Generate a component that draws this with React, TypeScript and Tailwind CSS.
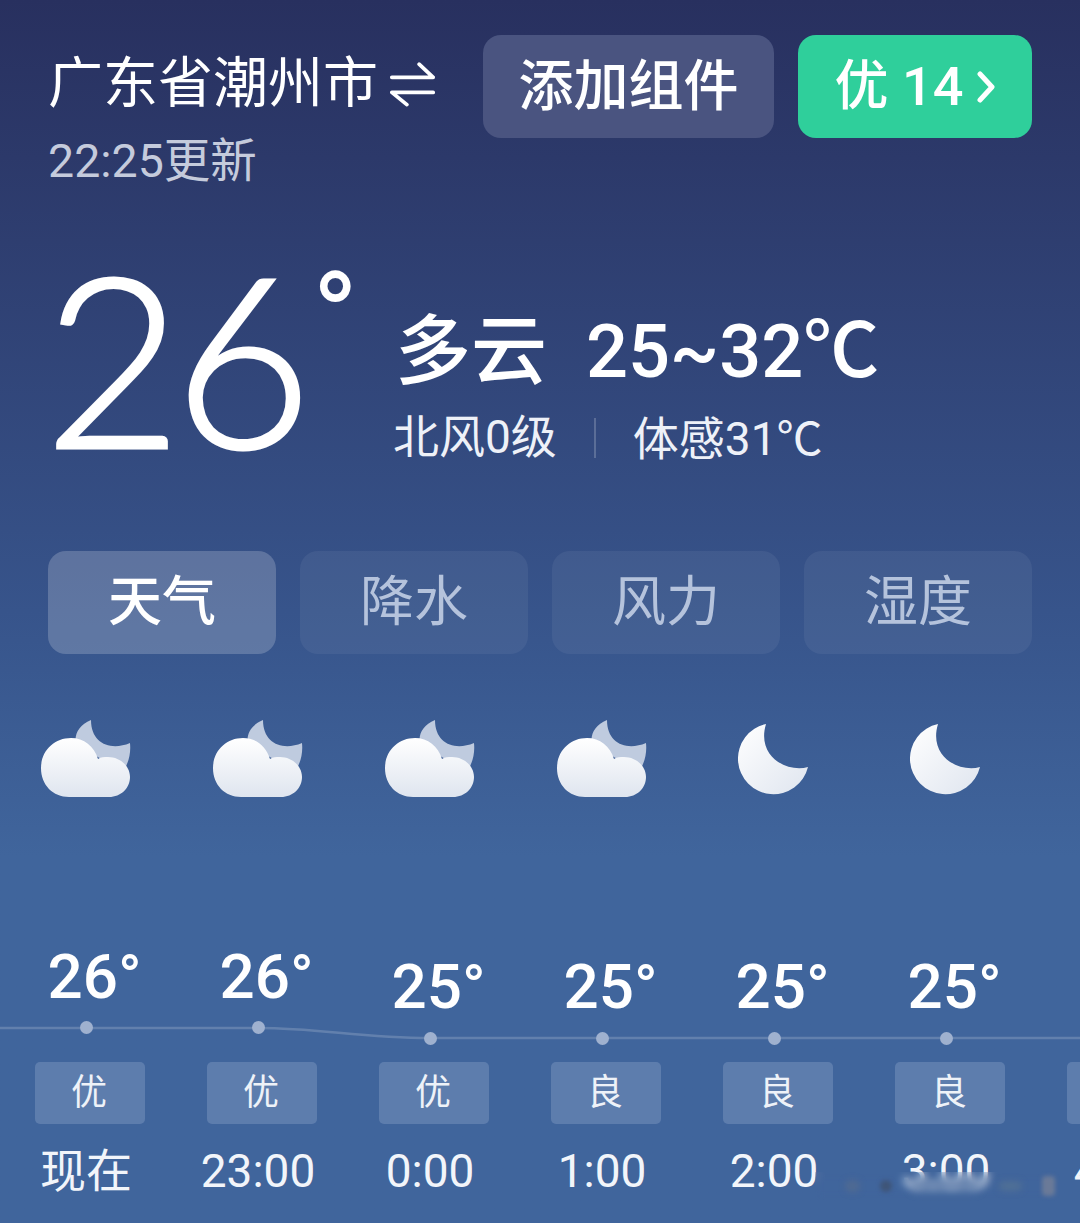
const font = { fontFamily: 'Roboto, "Noto Sans CJK SC", sans-serif' };

function CloudMoon() {
  return (
    <svg width="90" height="78" viewBox="0 0 90 78">
      <defs>
        <linearGradient id="cm" x1="0" y1="0" x2="0" y2="1">
          <stop offset="0" stopColor="#ffffff" />
          <stop offset="1" stopColor="#dfe5ef" />
        </linearGradient>
      </defs>
      <path d="M50 0C38 5 33 14 35 24L82 52C88 42 90 33 89 23C70 31 50 24 50 0Z" fill="#bfcbdf" />
      <path d="M28 77C12 77 0 65 0 48C0 31 13 18 30 18C43 18 53 26 57 39C60 37 63 37 67 37C79 37 89 46 89 57C89 68 80 77 68 77Z" fill="url(#cm)" />
    </svg>
  );
}

function Moon() {
  return (
    <svg width="72" height="72" viewBox="0 0 72 72">
      <defs>
        <linearGradient id="mn" x1="0" y1="0" x2="1" y2="1">
          <stop offset="0" stopColor="#ffffff" />
          <stop offset="1" stopColor="#dfe5ef" />
        </linearGradient>
      </defs>
      <path d="M28 1A35.5 35.5 0 1 0 70 44C50 50 18 34 28 1Z" fill="url(#mn)" />
    </svg>
  );
}

const hours = [
  { temp: '26°', air: '优', time: '现在', icon: 'c', low: false },
  { temp: '26°', air: '优', time: '23:00', icon: 'c', low: false },
  { temp: '25°', air: '优', time: '0:00', icon: 'c', low: true },
  { temp: '25°', air: '良', time: '1:00', icon: 'c', low: true },
  { temp: '25°', air: '良', time: '2:00', icon: 'm', low: true },
  { temp: '25°', air: '良', time: '3:00', icon: 'm', low: true },
  { temp: '25°', air: '良', time: '4:00', icon: 'm', low: true },
];

const tabs = ['天气', '降水', '风力', '湿度'];

export default function App() {
  return (
    <div
      style={font}
      className="relative w-[1080px] h-[1223px] overflow-hidden bg-gradient-to-b from-[#28305f] via-[#37548b] via-50% to-[#40659c] to-70% text-white"
    >
      <header className="flex justify-between pl-[48px] pr-[48px] pt-[35px]">
        <div>
          <div className="flex items-center h-[88px] mt-[4px] text-[55px] leading-none">
            <span>广东省潮州市</span>
            <svg className="ml-[11px]" width="47" height="48" viewBox="0 0 50 50" fill="none" stroke="white" strokeWidth="4" strokeLinecap="round" strokeLinejoin="round">
              <path d="M3 19H47L32 5" />
              <path d="M47 35H3L19 48" />
            </svg>
          </div>
          <div className="text-[46.5px] leading-none mt-[11px] text-[#c5cbdc]">22:25更新</div>
        </div>
        <div className="flex gap-[24px]">
          <div className="flex items-center justify-center w-[291px] h-[103px] rounded-[18px] bg-[#4a5480] text-[55px] font-medium">添加组件</div>
          <div className="flex items-center justify-center gap-[14px] w-[234px] h-[103px] rounded-[18px] bg-[#2fcf9b] text-[54px] font-medium">
            <span>优 14</span>
            <svg width="18" height="34" viewBox="0 0 18 34" fill="none" stroke="white" strokeWidth="5" strokeLinecap="round" strokeLinejoin="round">
              <path d="M3 4L15 17L3 30" />
            </svg>
          </div>
        </div>
      </header>

      <section className="flex items-start pl-[48px] mt-[45px] h-[280px]">
        <div className="relative -ml-[4px] w-[351px] font-['Lato'] text-[238px] leading-[252px] font-light tracking-[-8px] [-webkit-text-stroke:3px_white]">
          26
          <span className="absolute left-[268px] -top-[12px] font-['Roboto'] text-[124px] leading-[200px] font-normal tracking-normal [-webkit-text-stroke:0]">°</span>
        </div>
        <div className="pt-[73px]">
          <div className="flex items-center h-[90px] font-medium">
            <span className="pt-[8px] text-[76px] leading-none">多云</span>
            <span className="ml-[39px] text-[74px] leading-none">
              25~32<span className="font-['Noto_Sans_CJK_SC'] text-[76px]">℃</span>
            </span>
          </div>
          <div className="flex items-center h-[60px] mt-[15px] text-[46px] text-[#eef1f8]">
            <span className="-ml-[2px]">北风0级</span>
            <span className="mx-[37px] w-[2px] h-[40px] bg-white/20" />
            <span>
              体感31<span className="font-['Noto_Sans_CJK_SC']">℃</span>
            </span>
          </div>
        </div>
      </section>

      <nav className="grid grid-cols-4 gap-[24px] px-[48px] mt-[41px]">
        {tabs.map((t, i) => (
          <div
            key={t}
            className={
              i === 0
                ? 'flex items-center justify-center h-[103px] rounded-[18px] bg-white/20 text-[54px] font-medium'
                : 'flex items-center justify-center h-[103px] rounded-[18px] bg-white/[0.06] text-[54px] text-[#b5c3dc]'
            }
          >
            {t}
          </div>
        ))}
      </nav>

      <section className="relative flex w-[1204px] mt-[65px]">
        <svg className="absolute left-0 top-[305px]" width="1204" height="24" viewBox="0 0 1204 24" fill="none">
          <path d="M0 4H258C320 4 360 14 430 14H1204" stroke="white" strokeOpacity="0.18" strokeWidth="2.5" />
        </svg>
        {hours.map((h, i) => (
          <div key={i} className="relative flex flex-col items-center w-[172px] shrink-0">
            <div className="flex items-center justify-center h-[80px]">
              {h.icon === 'c' ? <CloudMoon /> : <Moon />}
            </div>
            <div className={h.low ? 'h-[263px] pt-[155px]' : 'h-[263px] pt-[145px]'}>
              <div className="text-[62px] leading-[70px] font-medium pl-[17px] text-center whitespace-nowrap -mt-[2px]">{h.temp}</div>
              <div className={h.low ? 'relative mx-auto mt-[10px] w-[13px] h-[13px] rounded-full bg-[#9fb1cf]' : 'relative mx-auto mt-[9px] w-[13px] h-[13px] rounded-full bg-[#9fb1cf]'} />
            </div>
            <div className="flex items-center justify-center w-[110px] h-[62px] ml-[8px] rounded-[5px] bg-[#5d7dad] text-[36px] text-[#eef2f8] pr-[2px]">{h.air}</div>
            <div className="mt-[17px] text-[46px] leading-[60px] text-[#f2f5fa] whitespace-nowrap">{h.time}</div>
          </div>
        ))}
      </section>

      <div className="absolute left-[815px] top-[1172px] w-[240px] h-[28px] backdrop-blur-[4px] flex items-center gap-[20px] pl-[30px]">
        <span className="w-[16px] h-[12px] rounded-full bg-[#4f6a92] blur-[3px]" />
        <span className="w-[12px] h-[12px] rounded-full bg-[#3f5578] blur-[2px]" />
        <span className="w-[70px] h-[10px] rounded-full bg-[#6f8ab2] blur-[4px]" />
        <span className="w-[24px] h-[10px] rounded-full bg-[#4f6f96] blur-[3px]" />
        <span className="w-[14px] h-[20px] rounded-sm bg-[#6a7a98] blur-[2px]" />
      </div>
    </div>
  );
}
